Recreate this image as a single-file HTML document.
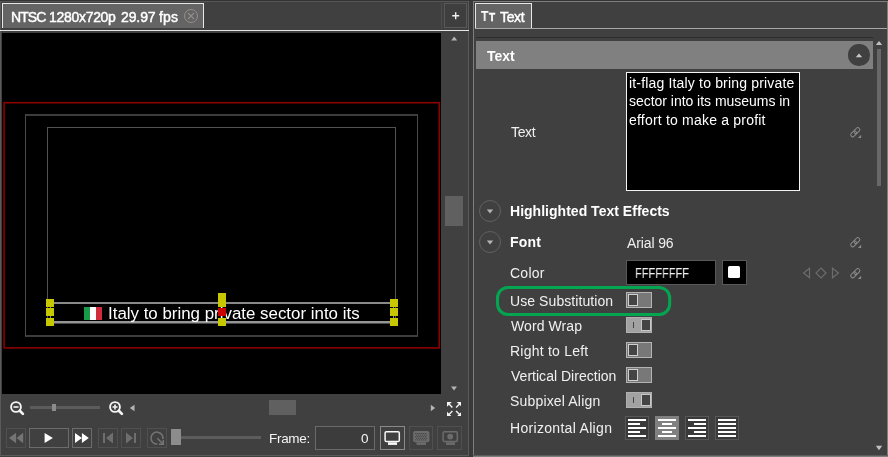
<!DOCTYPE html>
<html><head><meta charset="utf-8">
<style>
html,body{margin:0;padding:0;}
body{width:888px;height:457px;background:#404040;position:relative;overflow:hidden;font-family:"Liberation Sans",sans-serif;font-size:14px;color:#f0f0f0;}
.a{position:absolute;}
.t{position:absolute;white-space:nowrap;line-height:1;will-change:transform;}
</style></head><body>
<!-- LEFT PANEL -->
<div class="a" style="left:0;top:0;width:469px;height:457px;background:#404040;"></div>
<div class="a" style="left:0;top:1px;width:469px;height:1px;background:#555;"></div>
<div class="a" style="left:468px;top:1px;width:1px;height:455px;background:#5a5a5a;"></div>
<div class="a" style="left:0;top:1px;width:1px;height:455px;background:#5a5a5a;"></div>
<div class="a" style="left:0;top:455px;width:469px;height:1px;background:#5a5a5a;"></div>
<!-- tab -->
<div class="a" style="left:0;top:0;width:888px;height:1px;background:#343434;"></div>
<div class="a" style="left:2px;top:3px;width:200px;height:24px;background:#646464;border:1px solid #e8e8e8;border-bottom:none;box-sizing:content-box;"></div>
<div class="t" id="tab1a" style="left:11px;top:10px;font-size:14px;color:#fff;-webkit-text-stroke:0.45px #fff;letter-spacing:-0.95px;">NTSC</div><div class="t" id="tab1b" style="left:49px;top:10px;font-size:14px;color:#fff;-webkit-text-stroke:0.45px #fff;letter-spacing:-0.3px;">1280x720p</div><div class="t" id="tab1c" style="left:121px;top:10px;font-size:14px;color:#fff;-webkit-text-stroke:0.45px #fff;letter-spacing:-0.1px;">29.97</div><div class="t" id="tab1d" style="left:159px;top:10px;font-size:14px;color:#fff;-webkit-text-stroke:0.45px #fff;letter-spacing:0.1px;">fps</div>
<svg class="a" style="left:183px;top:8px" width="16" height="16" viewBox="0 0 16 16"><circle cx="8" cy="8" r="6.5" fill="none" stroke="#9a8c8c" stroke-width="1"/><path d="M5 5L11 11M11 5L5 11" stroke="#9a8c8c" stroke-width="1.1" fill="none"/></svg>
<!-- plus button -->
<div class="a" style="left:441px;top:3px;width:1px;height:26px;background:#4c4c4c;"></div>
<div class="a" style="left:444px;top:3px;width:21px;height:23px;border:1px solid #585858;background:#3e3e3e;"></div>
<svg class="a" style="left:451px;top:11px" width="10" height="10" viewBox="0 0 10 10"><path d="M1.2 4.7H8.2M4.7 1.2V8.2" stroke="#f0f0f0" stroke-width="1.4" fill="none"/></svg>
<!-- white line -->
<div class="a" style="left:0;top:30px;width:469px;height:1px;background:#e6e6e6;"></div>
<!-- viewport -->
<div class="a" style="left:2px;top:33px;width:439px;height:361px;background:#000;"></div>
<svg class="a" style="left:2px;top:100px" width="439" height="250" viewBox="0 0 439 250"><rect x="2.1" y="2.7" width="435.2" height="245.2" fill="none" stroke="#8c0000" stroke-width="1.6"/></svg>
<div class="a" style="left:25px;top:114px;width:391px;height:219px;border:1px solid #4a4a4a;border-top:2px solid #3c3c3c;border-bottom:2px solid #3c3c3c;"></div>
<div class="a" style="left:47px;top:127px;width:347px;height:196px;border:1px solid #525252;border-bottom:none;"></div>
<!-- selection box -->
<div class="a" style="left:50px;top:302px;width:344px;height:2px;background:#8a8a8a;"></div>
<div class="a" style="left:50px;top:321px;width:344px;height:2px;background:#969696;"></div>
<div class="a" style="left:50px;top:323px;width:344px;height:1px;background:#4a4a4a;"></div>
<div class="a" style="left:50px;top:302px;width:1px;height:21px;background:#888;"></div>
<div class="a" style="left:393px;top:302px;width:1px;height:21px;background:#888;"></div>
<!-- flag -->
<div class="a" style="left:84px;top:307px;width:6px;height:13px;background:#189a48;"></div>
<div class="a" style="left:90px;top:307px;width:6px;height:13px;background:#fff;"></div>
<div class="a" style="left:96px;top:307px;width:6px;height:13px;background:#d02c3c;"></div>
<div class="t" id="vtext" style="left:108.2px;top:305.5px;font-size:16.9px;color:#fff;">Italy to bring private sector into its</div>
<!-- handles -->
<div class="a" style="left:46px;top:299px;width:8px;height:8px;background:#c8c800;"></div>
<div class="a" style="left:46px;top:308px;width:8px;height:8px;background:#c8c800;"></div>
<div class="a" style="left:46px;top:318px;width:8px;height:8px;background:#c8c800;"></div>
<div class="a" style="left:390px;top:299px;width:8px;height:8px;background:#c8c800;"></div>
<div class="a" style="left:390px;top:308px;width:8px;height:8px;background:#c8c800;"></div>
<div class="a" style="left:390px;top:318px;width:8px;height:8px;background:#c8c800;"></div>
<div class="a" style="left:218px;top:293px;width:8px;height:14px;background:#c8c800;"></div>
<div class="a" style="left:218px;top:308px;width:8px;height:8px;background:#cc0000;"></div>
<div class="a" style="left:218px;top:318px;width:8px;height:8px;background:#c8c800;"></div>
<!-- v scrollbar -->
<div class="a" style="left:445px;top:196px;width:18px;height:30px;background:#606060;"></div>
<svg class="a" style="left:450px;top:36px" width="8" height="5" viewBox="0 0 8 5"><path d="M1.2 4.6L4.2 0.6L7.2 4.6Z" fill="#b4b4b4"/></svg>
<svg class="a" style="left:450px;top:385.5px" width="8" height="5" viewBox="0 0 8 5"><path d="M1 0.5L4 4.4L7 0.5Z" fill="#b4b4b4"/></svg>
<!-- bottom bar row 1 -->
<svg class="a" style="left:8px;top:399px" width="18" height="18" viewBox="0 0 18 18"><circle cx="8" cy="8" r="4.9" fill="none" stroke="#f4f4f4" stroke-width="1.9"/><path d="M11.8 11.8L14.9 14.9" stroke="#f4f4f4" stroke-width="2.7" stroke-linecap="round"/><path d="M5.5 8H10.5" stroke="#f4f4f4" stroke-width="1.6"/></svg>
<div class="a" style="left:30px;top:406px;width:70px;height:3px;background:#5c5c5c;"></div>
<div class="a" style="left:52px;top:404px;width:4px;height:7px;background:#8c8c8c;"></div>
<svg class="a" style="left:107px;top:399px" width="18" height="18" viewBox="0 0 18 18"><circle cx="8" cy="8" r="4.9" fill="none" stroke="#f4f4f4" stroke-width="1.9"/><path d="M11.8 11.8L14.9 14.9" stroke="#f4f4f4" stroke-width="2.7" stroke-linecap="round"/><path d="M5.5 8H10.5M8 5.5V10.5" stroke="#f4f4f4" stroke-width="1.6"/></svg>
<svg class="a" style="left:129px;top:404px" width="6" height="8" viewBox="0 0 6 8"><path d="M5.5 0.8L0.8 4L5.5 7.2Z" fill="#b4b4b4"/></svg>
<div class="a" style="left:269px;top:400px;width:27px;height:15px;background:#606060;"></div>
<svg class="a" style="left:430px;top:404px" width="6" height="8" viewBox="0 0 6 8"><path d="M0.8 0.8L5.2 4L0.8 7.2Z" fill="#b4b4b4"/></svg>
<svg class="a" id="expand" style="left:446.8px;top:401.6px" width="14.5" height="14.5" viewBox="0 0 14.5 14.5"><g fill="#f4f4f4" stroke="none"><path d="M0 0H4.8L0 4.8Z"/><path d="M14.5 0H9.7L14.5 4.8Z"/><path d="M0 14.5H4.8L0 9.7Z"/><path d="M14.5 14.5H9.7L14.5 9.7Z"/></g><g fill="none" stroke="#f4f4f4" stroke-width="1.4"><path d="M1.5 1.5L5.4 5.4M13 1.5L9.1 5.4M1.5 13L5.4 9.1M13 13L9.1 9.1"/></g></svg>
<!-- bottom bar row 2 -->
<div class="a" style="left:6px;top:428px;width:18px;height:18px;border:1px solid #505050;"></div>
<svg class="a" style="left:9px;top:432px" width="15" height="12" viewBox="0 0 15 12"><path d="M7.1 0.8L0 6L7.1 11.2ZM14.2 0.8L7.6 6L14.2 11.2Z" fill="#747474"/></svg>
<div class="a" style="left:29px;top:428px;width:38px;height:18px;border:1px solid #6c6c6c;"></div>
<svg class="a" style="left:44px;top:432px" width="10" height="12" viewBox="0 0 10 12"><path d="M0.6 1L8.9 6L0.6 11Z" fill="#fff"/></svg>
<div class="a" style="left:72px;top:428px;width:18px;height:18px;border:1px solid #6c6c6c;"></div>
<svg class="a" style="left:75px;top:432px" width="15" height="12" viewBox="0 0 15 12"><path d="M0 1L6.9 6L0 11ZM6.9 1L13.8 6L6.9 11Z" fill="#fff"/></svg>
<div class="a" style="left:98px;top:428px;width:18px;height:18px;border:1px solid #505050;"></div>
<svg class="a" style="left:102px;top:432px" width="12" height="12" viewBox="0 0 12 12"><path d="M1 1H3V11H1ZM11 0.5L4 6L11 11.5Z" fill="#6e6e6e"/></svg>
<div class="a" style="left:121px;top:428px;width:18px;height:18px;border:1px solid #505050;"></div>
<svg class="a" style="left:125px;top:432px" width="12" height="12" viewBox="0 0 12 12"><path d="M9 1H11V11H9ZM1 0.5L8 6L1 11.5Z" fill="#6e6e6e"/></svg>
<div class="a" style="left:147px;top:428px;width:18px;height:18px;border:1px solid #505050;"></div>
<svg class="a" style="left:149px;top:430px" width="17" height="17" viewBox="0 0 17 17"><path d="M13.9 9.2A6 6 0 1 0 8.4 14.1" fill="none" stroke="#747474" stroke-width="1.5"/><path d="M8.3 8.3L14 14M14.3 10V14.3H10" fill="none" stroke="#747474" stroke-width="1.5"/></svg>
<div class="a" style="left:181px;top:436px;width:80px;height:3px;background:#5c5c5c;"></div>
<div class="a" style="left:171px;top:429px;width:10px;height:16px;background:#8c8c8c;"></div>
<div class="t" id="frame" style="left:269.3px;top:432.4px;font-size:13.5px;color:#f4f4f4;letter-spacing:-0.3px;">Frame:</div>
<div class="a" style="left:315px;top:426px;width:58px;height:22px;border:1px solid #6a6a6a;background:#3c3c3c;"></div>
<div class="t" id="zero" style="left:361.4px;top:432.4px;font-size:13.5px;color:#f4f4f4;">0</div>
<div class="a" style="left:380px;top:426px;width:23px;height:22px;border:1px solid #8a8a8a;"></div>
<svg class="a" style="left:383px;top:430px" width="19" height="16" viewBox="0 0 19 16"><rect x="2.1" y="1.7" width="14.2" height="9.8" rx="1.3" fill="none" stroke="#f8f8f8" stroke-width="1.5"/><path d="M5 12.3H14V14.9H5Z" fill="#f8f8f8"/></svg>
<div class="a" style="left:409px;top:426px;width:22px;height:22px;border:1px solid #505050;"></div>
<svg class="a" style="left:411.6px;top:430px" width="19" height="16" viewBox="0 0 19 16"><rect x="1.2" y="0.9" width="16.2" height="11.4" rx="2" fill="#6c6c6c"/><rect x="3.2" y="3.0" width="1" height="1" fill="#3c3c3c"/><rect x="5.2" y="3.0" width="1" height="1" fill="#3c3c3c"/><rect x="7.2" y="3.0" width="1" height="1" fill="#3c3c3c"/><rect x="9.2" y="3.0" width="1" height="1" fill="#3c3c3c"/><rect x="11.2" y="3.0" width="1" height="1" fill="#3c3c3c"/><rect x="13.2" y="3.0" width="1" height="1" fill="#3c3c3c"/><rect x="4.2" y="4.6" width="1" height="1" fill="#3c3c3c"/><rect x="6.2" y="4.6" width="1" height="1" fill="#3c3c3c"/><rect x="8.2" y="4.6" width="1" height="1" fill="#3c3c3c"/><rect x="10.2" y="4.6" width="1" height="1" fill="#3c3c3c"/><rect x="12.2" y="4.6" width="1" height="1" fill="#3c3c3c"/><rect x="14.2" y="4.6" width="1" height="1" fill="#3c3c3c"/><rect x="3.2" y="6.2" width="1" height="1" fill="#3c3c3c"/><rect x="5.2" y="6.2" width="1" height="1" fill="#3c3c3c"/><rect x="7.2" y="6.2" width="1" height="1" fill="#3c3c3c"/><rect x="9.2" y="6.2" width="1" height="1" fill="#3c3c3c"/><rect x="11.2" y="6.2" width="1" height="1" fill="#3c3c3c"/><rect x="13.2" y="6.2" width="1" height="1" fill="#3c3c3c"/><rect x="4.2" y="7.800000000000001" width="1" height="1" fill="#3c3c3c"/><rect x="6.2" y="7.800000000000001" width="1" height="1" fill="#3c3c3c"/><rect x="8.2" y="7.800000000000001" width="1" height="1" fill="#3c3c3c"/><rect x="10.2" y="7.800000000000001" width="1" height="1" fill="#3c3c3c"/><rect x="12.2" y="7.800000000000001" width="1" height="1" fill="#3c3c3c"/><rect x="14.2" y="7.800000000000001" width="1" height="1" fill="#3c3c3c"/><rect x="3.2" y="9.4" width="1" height="1" fill="#3c3c3c"/><rect x="5.2" y="9.4" width="1" height="1" fill="#3c3c3c"/><rect x="7.2" y="9.4" width="1" height="1" fill="#3c3c3c"/><rect x="9.2" y="9.4" width="1" height="1" fill="#3c3c3c"/><rect x="11.2" y="9.4" width="1" height="1" fill="#3c3c3c"/><rect x="13.2" y="9.4" width="1" height="1" fill="#3c3c3c"/><path d="M4.5 12.3H14V14.9H4.5Z" fill="#6c6c6c"/></svg>
<div class="a" style="left:437px;top:426px;width:23px;height:22px;border:1px solid #505050;"></div>
<svg class="a" style="left:440.8px;top:430px" width="19" height="16" viewBox="0 0 19 16"><rect x="2.1" y="1.7" width="14.2" height="9.8" rx="1.3" fill="none" stroke="#6c6c6c" stroke-width="1.5"/><circle cx="9.2" cy="6.6" r="2.9" fill="#6c6c6c"/><path d="M5 12.3H14V14.9H5Z" fill="#6c6c6c"/></svg>

<!-- RIGHT PANEL -->
<div class="a" style="left:469px;top:1px;width:4px;height:456px;background:#393939;"></div>
<div class="a" style="left:473px;top:1px;width:1px;height:456px;background:#7e7e7e;"></div>
<div class="a" style="left:473px;top:1px;width:415px;height:1px;background:#7e7e7e;"></div>
<div class="a" style="left:887px;top:1px;width:1px;height:456px;background:#7e7e7e;"></div>
<div class="a" style="left:473px;top:455px;width:415px;height:1px;background:#5c5c5c;"></div>
<div class="a" style="left:473px;top:456px;width:415px;height:1px;background:#7e7e7e;"></div>
<div class="a" style="left:475px;top:28px;width:412px;height:1px;background:#a8a8a8;"></div>
<div class="a" style="left:475px;top:3px;width:55px;height:24px;background:#646464;border:1px solid #e8e8e8;border-bottom:none;"></div>
<div class="t" id="tt1" style="left:481px;top:9.2px;font-size:14px;font-weight:bold;color:#fff;transform:scaleX(0.86);transform-origin:0 0;">T</div>
<div class="t" id="tt2" style="left:488.6px;top:12.6px;font-size:10px;font-weight:bold;color:#fff;-webkit-text-stroke:0.4px #fff;">T</div>
<div class="t" id="tab2" style="left:499.5px;top:10px;font-size:14px;color:#fff;letter-spacing:-0.35px;-webkit-text-stroke:0.45px #fff;">Text</div>
<div class="a" style="left:476px;top:37px;width:397px;height:1px;background:#2c2c2c;"></div>
<div class="a" style="left:476px;top:41px;width:397px;height:28px;background:#808080;"></div>
<div class="t" id="hdr" style="left:487px;top:49px;font-size:14px;font-weight:bold;color:#fff;">Text</div>
<div class="a" style="left:848.4px;top:44.4px;width:21.2px;height:21.2px;border-radius:50%;background:#404040;"></div>
<svg class="a" style="left:855px;top:52.6px" width="8" height="5" viewBox="0 0 8 5"><path d="M0.8 4.2L4 0.6L7.2 4.2Z" fill="#c8c8c8"/></svg>
<!-- scrollbar -->
<svg class="a" style="left:875px;top:40px" width="8" height="6" viewBox="0 0 8 6"><path d="M0.8 5L4 1L7.2 5Z" fill="#c0c0c0"/></svg>
<div class="a" style="left:877px;top:49px;width:4px;height:137px;background:#686868;"></div>
<svg class="a" style="left:875px;top:445px" width="8" height="6" viewBox="0 0 8 6"><path d="M0.8 0.8L4 5.2L7.2 0.8Z" fill="#c0c0c0"/></svg>
<!-- text row -->
<div class="t" id="l_text" style="left:511.4px;top:124.9px;letter-spacing:-0.35px;">Text</div>
<div class="a" style="left:626px;top:72px;width:172px;height:117px;border:1px solid #f4f4f4;background:#000;"></div>
<div class="t" id="ta1" style="color:#fff;left:628.7px;top:75.8px;letter-spacing:0.17px;">it-flag Italy to bring private</div>
<div class="t" id="ta2" style="color:#fff;left:628.7px;top:94.2px;letter-spacing:-0.03px;">sector into its museums in</div>
<div class="t" id="ta3" style="color:#fff;left:628.7px;top:112.8px;letter-spacing:0.2px;">effort to make a profit</div>
<svg class="a" style="left:848px;top:126px" width="15" height="13" viewBox="0 0 15 13"><g transform="translate(7.25 6.2) rotate(-45)" fill="none" stroke="#8c8c8c" stroke-width="1"><rect x="-5.6" y="-2" width="6.6" height="4" rx="2"/><rect x="-1" y="-2" width="6.6" height="4" rx="2"/></g><path d="M13.1 8.8V12H9.9Z" fill="#8c8c8c"/></svg>
<!-- highlighted -->
<div class="a" style="left:479px;top:200px;width:20px;height:20px;border:1px solid #606060;border-radius:50%;"></div>
<svg class="a" style="left:486px;top:209px" width="8" height="5" viewBox="0 0 8 5"><path d="M0.8 0.6L4 4.4L7.2 0.6Z" fill="#b4b4b4"/></svg>
<div class="t" id="l_hte" style="left:510.3px;top:204.1px;font-weight:bold;color:#fff;letter-spacing:0.02px;">Highlighted Text Effects</div>
<div class="a" style="left:479px;top:231px;width:20px;height:20px;border:1px solid #606060;border-radius:50%;"></div>
<svg class="a" style="left:486px;top:240px" width="8" height="5" viewBox="0 0 8 5"><path d="M0.8 0.6L4 4.4L7.2 0.6Z" fill="#b4b4b4"/></svg>
<div class="t" id="l_font" style="left:510.3px;top:235.1px;font-weight:bold;color:#fff;letter-spacing:0.2px;">Font</div>
<div class="t" id="l_arial" style="left:626.5px;top:236.1px;letter-spacing:-0.12px;">Arial 96</div>
<svg class="a" style="left:848px;top:236px" width="15" height="13" viewBox="0 0 15 13"><g transform="translate(7.25 6.2) rotate(-45)" fill="none" stroke="#8c8c8c" stroke-width="1"><rect x="-5.6" y="-2" width="6.6" height="4" rx="2"/><rect x="-1" y="-2" width="6.6" height="4" rx="2"/></g><path d="M13.1 8.8V12H9.9Z" fill="#8c8c8c"/></svg>
<!-- color -->
<div class="t" id="l_color" style="left:510.3px;top:266.1px;letter-spacing:0.25px;">Color</div>
<div class="a" style="left:626px;top:260px;width:88px;height:23px;border:1px solid #585858;background:#000;"></div>
<div class="t" id="l_ffff" style="left:634.7px;top:265.9px;transform:scaleX(0.79);transform-origin:0 0;">FFFFFFFF</div>
<div class="a" style="left:722px;top:260px;width:23px;height:23px;border:1px solid #585858;background:#000;"></div>
<div class="a" style="left:728px;top:266px;width:12px;height:12px;background:#fff;border-radius:1.5px;"></div>
<svg class="a" style="left:802px;top:267px" width="40" height="12" viewBox="0 0 40 12"><g fill="none" stroke="#6c6c6c" stroke-width="1.2"><path d="M7.5 1.2V10.8L1.6 6Z"/><path d="M19 1L24 6L19 11L14 6Z"/><path d="M30.5 1.2V10.8L36.4 6Z"/></g></svg>
<svg class="a" style="left:848px;top:267px" width="15" height="13" viewBox="0 0 15 13"><g transform="translate(7.25 6.2) rotate(-45)" fill="none" stroke="#8c8c8c" stroke-width="1"><rect x="-5.6" y="-2" width="6.6" height="4" rx="2"/><rect x="-1" y="-2" width="6.6" height="4" rx="2"/></g><path d="M13.1 8.8V12H9.9Z" fill="#8c8c8c"/></svg>
<!-- green highlight -->
<svg class="a" style="left:494px;top:283px" width="180" height="36" viewBox="0 0 180 36"><rect x="3.5" y="4.4" width="172.2" height="27.1" rx="10.5" fill="none" stroke="#04a550" stroke-width="3"/></svg>
<div class="t" id="l_us" style="left:510.4px;top:293.8px;letter-spacing:0.08px;">Use Substitution</div>
<div class="a" style="left:626px;top:292px;width:24px;height:14px;border:1px solid #b4b4b4;background:#787878;"></div><div class="a" style="left:628px;top:294px;width:8px;height:10px;border:1px solid #d0d0d0;background:#444;"></div>
<div class="t" id="l_ww" style="left:511.4px;top:318.8px;letter-spacing:0.08px;">Word Wrap</div>
<div class="a" style="left:626px;top:317px;width:24px;height:14px;border:1px solid #b0b0b0;background:#a2a2a2;"></div><div class="a" style="left:641px;top:319px;width:8px;height:10px;border:1px solid #c8c8c8;background:#444;"></div><div class="a" style="left:633px;top:322px;width:1.4px;height:6px;background:#444;"></div>
<div class="t" id="l_rl" style="left:510.4px;top:343.8px;letter-spacing:0.23px;">Right to Left</div>
<div class="a" style="left:626px;top:342px;width:24px;height:14px;border:1px solid #b4b4b4;background:#787878;"></div><div class="a" style="left:628px;top:344px;width:8px;height:10px;border:1px solid #d0d0d0;background:#444;"></div>
<div class="t" id="l_vd" style="left:511.4px;top:368.7px;letter-spacing:0.02px;">Vertical Direction</div>
<div class="a" style="left:626px;top:367px;width:24px;height:14px;border:1px solid #b4b4b4;background:#787878;"></div><div class="a" style="left:628px;top:369px;width:8px;height:10px;border:1px solid #d0d0d0;background:#444;"></div>
<div class="t" id="l_sa" style="left:510.4px;top:393.7px;letter-spacing:0.17px;">Subpixel Align</div>
<div class="a" style="left:626px;top:392px;width:24px;height:14px;border:1px solid #b0b0b0;background:#a2a2a2;"></div><div class="a" style="left:641px;top:394px;width:8px;height:10px;border:1px solid #c8c8c8;background:#444;"></div><div class="a" style="left:633px;top:397px;width:1.4px;height:6px;background:#444;"></div>
<div class="t" id="l_ha" style="left:510.4px;top:420.7px;letter-spacing:0.31px;">Horizontal Align</div>
<div class="a" style="left:625px;top:416px;width:22px;height:22px;border:1px solid #585858;background:#3a3a3a;"></div><div class="a" style="left:628px;top:419px;width:18px;height:2px;background:#fff;"></div><div class="a" style="left:628px;top:423px;width:12px;height:2px;background:#fff;"></div><div class="a" style="left:628px;top:427px;width:18px;height:2px;background:#fff;"></div><div class="a" style="left:628px;top:431px;width:12px;height:2px;background:#fff;"></div><div class="a" style="left:628px;top:435px;width:18px;height:2px;background:#fff;"></div>
<div class="a" style="left:655px;top:416px;width:22px;height:22px;border:1px solid #808080;background:#808080;"></div><div class="a" style="left:658.0px;top:419px;width:18px;height:2px;background:#fff;"></div><div class="a" style="left:662.0px;top:423px;width:10px;height:2px;background:#fff;"></div><div class="a" style="left:658.0px;top:427px;width:18px;height:2px;background:#fff;"></div><div class="a" style="left:662.0px;top:431px;width:10px;height:2px;background:#fff;"></div><div class="a" style="left:658.0px;top:435px;width:18px;height:2px;background:#fff;"></div>
<div class="a" style="left:685px;top:416px;width:22px;height:22px;border:1px solid #585858;background:#3a3a3a;"></div><div class="a" style="left:688px;top:419px;width:18px;height:2px;background:#fff;"></div><div class="a" style="left:694px;top:423px;width:12px;height:2px;background:#fff;"></div><div class="a" style="left:688px;top:427px;width:18px;height:2px;background:#fff;"></div><div class="a" style="left:694px;top:431px;width:12px;height:2px;background:#fff;"></div><div class="a" style="left:688px;top:435px;width:18px;height:2px;background:#fff;"></div>
<div class="a" style="left:715px;top:416px;width:22px;height:22px;border:1px solid #585858;background:#3a3a3a;"></div><div class="a" style="left:718px;top:419px;width:18px;height:2px;background:#fff;"></div><div class="a" style="left:718px;top:423px;width:18px;height:2px;background:#fff;"></div><div class="a" style="left:718px;top:427px;width:18px;height:2px;background:#fff;"></div><div class="a" style="left:718px;top:431px;width:18px;height:2px;background:#fff;"></div><div class="a" style="left:718px;top:435px;width:18px;height:2px;background:#fff;"></div>
</body></html>
